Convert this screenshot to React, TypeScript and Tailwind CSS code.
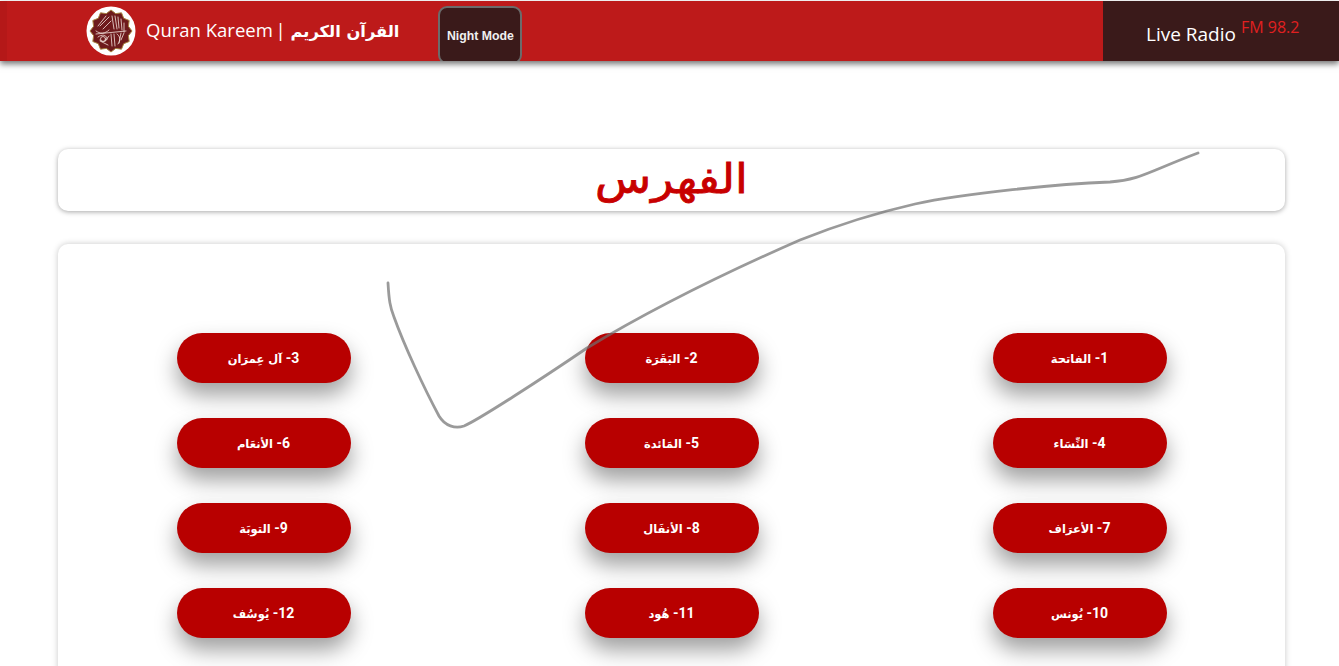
import React from 'react';

const surahs = [
  ['1-', 'الفاتحة'],
  ['2-', 'البَقَرَة'],
  ['3-', 'آل عِمرَان'],
  ['4-', 'النِّسَاء'],
  ['5-', 'المَائدة'],
  ['6-', 'الأنعَام'],
  ['7-', 'الأعرَاف'],
  ['8-', 'الأنفَال'],
  ['9-', 'التوبَة'],
  ['10-', 'يُونس'],
  ['11-', 'هُود'],
  ['12-', 'يُوسُف'],
];

function Logo() {
  const points = [];
  for (let i = 0; i < 24; i++) {
    const r = i % 2 === 0 ? 21 : 18;
    const a = (i * Math.PI) / 12;
    points.push(`${25 + r * Math.sin(a)},${25 - r * Math.cos(a)}`);
  }
  return (
    <svg viewBox="0 0 50 50" className="w-[50px] h-[50px] shrink-0">
      <circle cx="25" cy="25" r="24.5" fill="#fff" />
      <polygon points={points.join(' ')} fill="#6e1a1c" stroke="#a8823f" strokeWidth="1" strokeLinejoin="round" />
      <g fill="none" stroke="#f3e2dc" strokeWidth="0.8" strokeLinecap="round">
        <path d="M26 10l2 13M29 10l2 13M32 11l1 11M35 13l1 11M38 17l0 9M23 11l-9 9M20 10l-8 10M25 15l-8 8" />
        <path d="M10 25c4 3 9 3 13-1M10 28l30-3M12 31c4-3 8-2 9 1s-5 5-7 2" />
        <path d="M25 28l1 12M28 28l1 12M31 28c3 2 4 6 1 10M35 27l-2 10M38 27l-3 7M22 39l-8-4M19 35l4-5" />
        <circle cx="17" cy="33" r="2.5" />
      </g>
    </svg>
  );
}

export default function App() {
  return (
    <div className="relative h-[666px] overflow-hidden bg-white font-['Open_Sans','DejaVu_Sans',sans-serif]">
      <header className="h-[60px] mt-px flex overflow-hidden bg-[#bd1a1a] shadow-[0_3px_6px_rgba(0,0,0,0.55)] border-l-[7px] border-[#b41818]">
        <div className="flex-1 flex items-center pl-[79px]">
          <Logo />
          <span className="ml-[10px] text-white text-[18.5px] leading-none whitespace-nowrap">
            Quran Kareem <span className="-ml-[2px]">|</span>{' '}
            <span className="font-bold text-[16.3px] font-['DejaVu_Sans',sans-serif]">القرآن الكريم</span>
          </span>
          <button className="self-start mt-[5px] ml-[39px] w-[84px] h-[58px] pt-[2px] rounded-[9px] border-2 border-[#6b6b6b] bg-[#3a1a1a] text-[#f0f0f0] text-[12.3px] font-bold font-['Liberation_Sans',sans-serif] whitespace-nowrap">
            Night Mode
          </button>
        </div>
        <div className="w-[236px] bg-[#3a1a1a] flex items-start pl-[43px] pt-[19px] whitespace-nowrap">
          <span className="text-white text-[19px] leading-[28px]">Live Radio</span>
          <span className="ml-[5px] -mt-[4px] text-[#e02020] text-[16px] leading-[22px]">FM 98.2</span>
        </div>
      </header>

      <main className="px-[58px] pt-[88px] pr-[54px]">
        <div className="h-[62px] rounded-[10px] bg-white shadow-[0_1px_5px_rgba(0,0,0,0.35)] flex items-center justify-center">
          <h1 dir="rtl" className="text-[#c80000] text-[46px] leading-none font-normal font-['DejaVu_Sans',sans-serif] [-webkit-text-stroke:0.9px_#c80000] scale-y-90 -mt-[2px]">
            الفهرس
          </h1>
        </div>

        <div className="mt-[33px] h-[500px] rounded-[10px] bg-white shadow-[0_0_6px_rgba(0,0,0,0.22)] pt-[89px]">
          <div dir="rtl" className="grid grid-cols-[408px_408px_408px] justify-center gap-y-[35px]">
            {surahs.map(([num, name]) => (
              <div key={num} className="flex justify-center">
                <button className="w-[174px] h-[50px] rounded-[25px] bg-[#b80000] text-white text-[14px] font-bold font-['Roboto','DejaVu_Sans',sans-serif] shadow-[0_12px_22px_rgba(0,0,0,0.38)]">
                  {num} <span className="text-[11.5px] font-['DejaVu_Sans',sans-serif]">{name}</span>
                </button>
              </div>
            ))}
          </div>
        </div>
      </main>

      <svg className="absolute inset-0 pointer-events-none" width="1339" height="666" fill="none">
        <path
          d="M388 283C389 300 390 307 394 317C404 345 424 388 439 416C445 426 455 429 464 426C478 420 540 380 587 348C650 310 720 275 800 240C840 224 880 212 915 204C965 193 1060 184 1110 182C1140 180 1150 171 1198 153"
          stroke="#6f6f6f"
          strokeOpacity="0.7"
          strokeWidth="2.8"
          strokeLinecap="round"
        />
      </svg>
    </div>
  );
}
